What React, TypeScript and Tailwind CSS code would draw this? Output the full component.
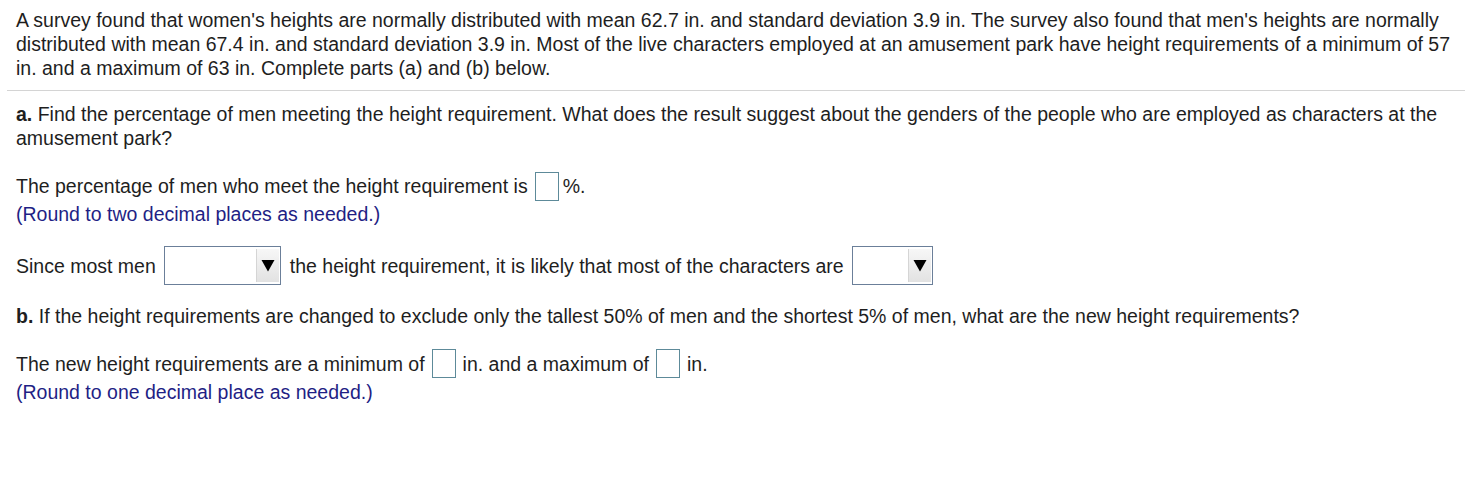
import React from "react";

function Box({ className = "" }: { className?: string }) {
  return (
    <span className={`inline-block align-middle w-[24px] h-[29px] border border-[#5d8a99] bg-white ${className}`} />
  );
}

function Select({ width }: { width: string }) {
  return (
    <span
      className={`inline-flex align-middle h-[39px] border border-[#6b7f99] bg-white items-center justify-end pr-[1px] ${width}`}
    >
      <span className="flex h-[33px] w-[23px] items-center justify-center bg-gradient-to-b from-[#f7f7f7] to-[#e2e2e2] border-l border-[#d5d5d5]">
        <svg width="14" height="13" viewBox="0 0 14 13">
          <polygon points="0.5,1 13.5,1 7,12.5" fill="#000" />
        </svg>
      </span>
    </span>
  );
}

export default function App() {
  return (
    <div
      className="bg-white text-[19.5px] leading-[24px] text-[#1e1e1e] w-[1465px] h-[480px] overflow-hidden whitespace-nowrap"
      style={{ fontFamily: '"Liberation Sans", Arial, sans-serif' }}
    >
      <div className="pl-[16px] pt-[8px]">
        A survey found that women's heights are normally distributed with mean 62.7 in. and standard deviation 3.9 in. The survey also found that men's heights are normally
        <br />
        distributed with mean 67.4 in. and standard deviation 3.9 in. Most of the live characters employed at an amusement park have height requirements of a minimum of 57
        <br />
        in. and a maximum of 63 in. Complete parts (a) and (b) below.
      </div>
      <div className="ml-[7px] mt-[10px] h-px bg-[#d4d4d4]" />
      <div className="pl-[16px] mt-[11px]">
        <div>
          <b>a.</b>
          {" "}Find the percentage of men meeting the height requirement. What does the result suggest about the genders of the people who are employed as characters at the
          <br />
          amusement park?
        </div>
        <div className="mt-[21px] flex items-center h-[30px]">
          <span>The percentage of men who meet the height requirement is</span>
          <Box className="ml-[7px] mr-[4px]" />
          <span>%.</span>
        </div>
        <div className="text-[#1f1f85] mt-[1px]">(Round to two decimal places as needed.)</div>
        <div className="mt-[20px] flex items-center h-[39px]">
          <span className="mr-[8px]">Since most men</span>
          <Select width="w-[117px]" />
          <span className="ml-[9px] mr-[8px]">the height requirement, it is likely that most of the characters are</span>
          <Select width="w-[81px]" />
        </div>
        <div className="mt-[19px]">
          <b>b.</b>
          {" "}If the height requirements are changed to exclude only the tallest 50% of men and the shortest 5% of men, what are the new height requirements?
        </div>
        <div className="mt-[21px] flex items-center h-[29px]">
          <span>The new height requirements are a minimum of</span>
          <Box className="ml-[7px] mr-[7px]" />
          <span>in. and a maximum of</span>
          <Box className="ml-[7px] mr-[7px]" />
          <span>in.</span>
        </div>
        <div className="text-[#1f1f85] mt-[2px]">(Round to one decimal place as needed.)</div>
      </div>
    </div>
  );
}
